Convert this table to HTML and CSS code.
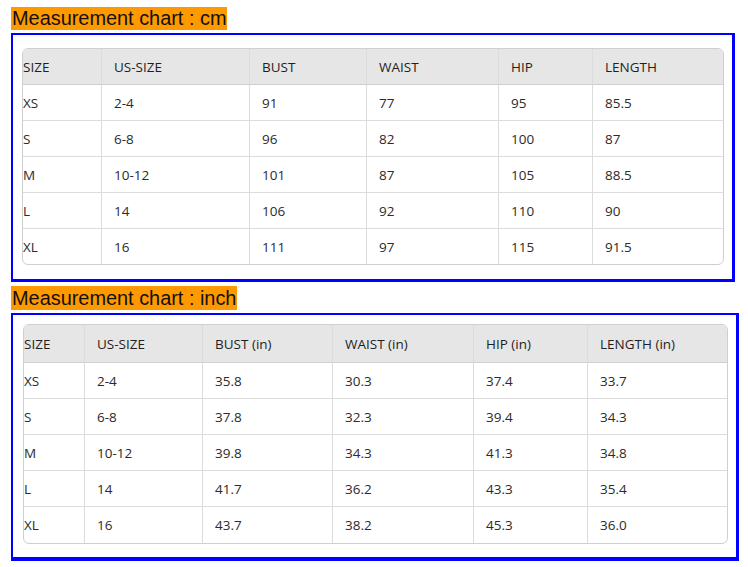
FILE: index.html
```html
<!DOCTYPE html>
<html lang="en">
<head>
<meta charset="utf-8">
<title>Measurement chart</title>
<link rel="stylesheet" href="styles.css">
</head>
<body>
<div class="page">
  <div class="title title-cm"><span class="label">Measurement chart : cm</span></div>
  <div class="frame frame-cm">
    <table class="chart chart-cm">
      <colgroup>
        <col class="c1"><col class="c2"><col class="c3"><col class="c4"><col class="c5"><col class="c6">
      </colgroup>
      <thead>
        <tr><th>SIZE</th><th>US-SIZE</th><th>BUST</th><th>WAIST</th><th>HIP</th><th>LENGTH</th></tr>
      </thead>
      <tbody>
        <tr><td>XS</td><td>2-4</td><td>91</td><td>77</td><td>95</td><td>85.5</td></tr>
        <tr><td>S</td><td>6-8</td><td>96</td><td>82</td><td>100</td><td>87</td></tr>
        <tr><td>M</td><td>10-12</td><td>101</td><td>87</td><td>105</td><td>88.5</td></tr>
        <tr><td>L</td><td>14</td><td>106</td><td>92</td><td>110</td><td>90</td></tr>
        <tr><td>XL</td><td>16</td><td>111</td><td>97</td><td>115</td><td>91.5</td></tr>
      </tbody>
    </table>
  </div>
  <div class="title title-inch"><span class="label">Measurement chart : inch</span></div>
  <div class="frame frame-inch">
    <table class="chart chart-inch">
      <colgroup>
        <col class="c1"><col class="c2"><col class="c3"><col class="c4"><col class="c5"><col class="c6">
      </colgroup>
      <thead>
        <tr><th>SIZE</th><th>US-SIZE</th><th>BUST (in)</th><th>WAIST (in)</th><th>HIP (in)</th><th>LENGTH (in)</th></tr>
      </thead>
      <tbody>
        <tr><td>XS</td><td>2-4</td><td>35.8</td><td>30.3</td><td>37.4</td><td>33.7</td></tr>
        <tr><td>S</td><td>6-8</td><td>37.8</td><td>32.3</td><td>39.4</td><td>34.3</td></tr>
        <tr><td>M</td><td>10-12</td><td>39.8</td><td>34.3</td><td>41.3</td><td>34.8</td></tr>
        <tr><td>L</td><td>14</td><td>41.7</td><td>36.2</td><td>43.3</td><td>35.4</td></tr>
        <tr><td>XL</td><td>16</td><td>43.7</td><td>38.2</td><td>45.3</td><td>36.0</td></tr>
      </tbody>
    </table>
  </div>
</div>
</body>
</html>
```
FILE: styles.css
```css
html, body {
  margin: 0;
  padding: 0;
  background: #ffffff;
}

.page {
  padding: 7px 0 0 11px;
}

.title {
  height: 23px;
  font-family: "Liberation Sans", Arial, sans-serif;
  font-size: 19.9px;
  line-height: 23px;
  color: #111111;
}

.title-inch {
  height: 24px;
  line-height: 24px;
  margin-top: 4px;
}

.label {
  display: inline-block;
  background: #ff9900;
  padding: 0 1px;
}

.frame {
  border: 2px solid #0000ff;
  border-right-width: 3px;
  border-bottom-width: 3px;
  margin-top: 3px;
}

.frame-cm {
  width: 702px;
  padding: 13px 8px 14px 9px;
}

.frame-inch {
  width: 705px;
  padding: 9px 8px 13px 10px;
  border-bottom-width: 4px;
}

.chart {
  border-collapse: separate;
  border-spacing: 0;
  table-layout: fixed;
  border: 1px solid #cfcfcf;
  border-radius: 6px;
  overflow: hidden;
  font-family: "Open Sans", "Noto Sans", sans-serif;
  font-size: 13.5px;
  color: #2b2b2b;
}

.chart th,
.chart td {
  text-align: left;
  font-weight: normal;
  padding: 0 0 0 12px;
  border-right: 1px solid #dcdcdc;
  border-bottom: 1px solid #dcdcdc;
  white-space: nowrap;
  vertical-align: middle;
}

.chart th {
  background: #e6e6e6;
  color: #1f1f1f;
  border-bottom-color: #d0d0d0;
}

.chart th:first-child,
.chart td:first-child {
  padding-left: 0;
}

.chart th:last-child,
.chart td:last-child {
  border-right: none;
}

.chart tbody tr:last-child td {
  border-bottom: none;
}

.chart-cm {
  width: 702px;
}
.chart-cm th,
.chart-cm td {
  height: 35px;
}
.chart-cm .c1 { width: 79px; }
.chart-cm .c2 { width: 148px; }
.chart-cm .c3 { width: 117px; }
.chart-cm .c4 { width: 132px; }
.chart-cm .c5 { width: 94px; }
.chart-cm .c6 { width: 130px; }

.chart-inch {
  width: 705px;
}
.chart-inch th {
  height: 37px;
}
.chart-inch td {
  height: 35px;
}
.chart-inch tbody tr:last-child td {
  height: 36px;
}
.chart-inch .c1 { width: 61px; }
.chart-inch .c2 { width: 118px; }
.chart-inch .c3 { width: 130px; }
.chart-inch .c4 { width: 141px; }
.chart-inch .c5 { width: 114px; }
.chart-inch .c6 { width: 139px; }
```
